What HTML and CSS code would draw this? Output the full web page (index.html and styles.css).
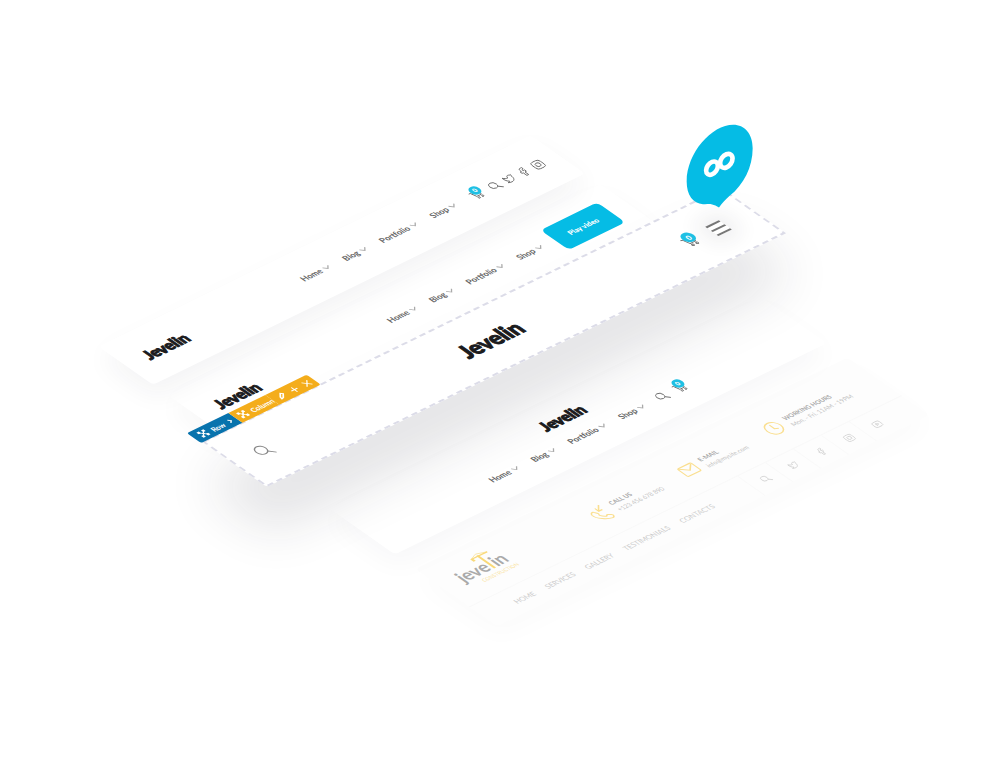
FILE: index.html
```html
<!DOCTYPE html>
<html lang="en">
<head>
<meta charset="utf-8">
<title>Jevelin header builder</title>
<link rel="stylesheet" href="styles.css">
</head>
<body>
<svg class="sprite" aria-hidden="true">
  <symbol id="chev" viewBox="0 0 8 8"><path d="M1 2.500 4 5.500 7 2.500"/></symbol>
  <symbol id="search" viewBox="0 0 14 14"><circle cx="5.800" cy="5.800" r="4.500"/><path d="m9 9 4.200 4.200"/></symbol>
  <symbol id="cart" viewBox="0 0 14 14"><path d="M.5 2h2.300l2 7h6.400l1.800-5.200H3.500"/><circle cx="5.600" cy="11.600" r="1.100"/><circle cx="10.600" cy="11.600" r="1.100"/></symbol>
  <symbol id="twitter" viewBox="0 0 14 14"><path d="M1.500 2.500C3 4.500 5 5.200 7 5.200 6.700 2.500 9.800 1.300 11.300 3l1.700-.4-1 1.900C12.300 9 9.500 12 5.800 12 4 12 2.500 11.600 1.300 10.800c1.500 0 2.500-.3 3.200-1C2.300 9 1.200 6 1.500 2.500Z"/></symbol>
  <symbol id="facebook" viewBox="0 0 14 14"><path d="M5.300 13V8H3.700V5.500h1.600V4C5.300 2 6.400 1 8.200 1h1.800v2.400H8.700c-.7 0-.9.300-.9.900v1.200H10L9.700 8H7.800v5Z"/></symbol>
  <symbol id="instagram" viewBox="0 0 14 14"><rect x="1" y="1" width="12" height="12" rx="3.500"/><circle cx="7" cy="7" r="2.900"/><path d="M10.400 3.500h.2"/></symbol>
  <symbol id="youtube" viewBox="0 0 14 14"><rect x="1" y="2" width="12" height="10" rx="3"/><path d="m5.500 5 3.500 2-3.500 2Z"/></symbol>
  <symbol id="move" viewBox="0 0 14 14"><path d="m3 3 8 8M11 3l-8 8"/><path d="M1 1h4v4H1zM9 1h4v4H9zM1 9h4v4H1zM9 9h4v4H9zM5.500 5.500h3v3h-3z" fill="currentColor" stroke="none"/></symbol>
</svg>
<main class="stage">
  <div class="plane">

    <section class="sheet sheet-classic">
      <a class="logo" href="#">Jevelin</a>
      <nav class="menu">
        <a href="#">Home<svg><use href="#chev"/></svg></a>
        <a href="#">Blog<svg><use href="#chev"/></svg></a>
        <a href="#">Portfolio<svg><use href="#chev"/></svg></a>
        <a href="#">Shop<svg><use href="#chev"/></svg></a>
      </nav>
      <div class="tools">
        <a class="cart" href="#" aria-label="Cart"><svg><use href="#cart"/></svg><span class="badge">0</span></a>
        <a href="#" aria-label="Search"><svg><use href="#search"/></svg></a>
        <a href="#" aria-label="Twitter"><svg><use href="#twitter"/></svg></a>
        <a href="#" aria-label="Facebook"><svg><use href="#facebook"/></svg></a>
        <a href="#" aria-label="Instagram"><svg><use href="#instagram"/></svg></a>
      </div>
    </section>

    <section class="sheet sheet-video">
      <a class="logo" href="#">Jevelin</a>
      <nav class="menu">
        <a href="#">Home<svg><use href="#chev"/></svg></a>
        <a href="#">Blog<svg><use href="#chev"/></svg></a>
        <a href="#">Portfolio<svg><use href="#chev"/></svg></a>
        <a href="#">Shop<svg><use href="#chev"/></svg></a>
      </nav>
      <button class="play" type="button">Play video</button>
    </section>

    <section class="sheet sheet-build">
      <a class="logo" href="#">Jevelin</a>
      <div class="line">
        <nav class="menu">
          <a href="#">Home<svg><use href="#chev"/></svg></a>
          <a href="#">Blog<svg><use href="#chev"/></svg></a>
          <a href="#">Portfolio<svg><use href="#chev"/></svg></a>
          <a href="#">Shop<svg><use href="#chev"/></svg></a>
        </nav>
        <div class="tools">
          <a href="#" aria-label="Search"><svg><use href="#search"/></svg></a>
          <a class="cart" href="#" aria-label="Cart"><svg><use href="#cart"/></svg><span class="badge">0</span></a>
        </div>
      </div>
    </section>

    <section class="sheet sheet-company">
      <div class="company-top">
        <a class="crane-logo" href="#">
          <span class="crane-name">jeve<svg class="crane" viewBox="0 0 6 20"><path d="M3 1v19" stroke-width="2.200"/><path d="M-5 2h18" stroke-width="1.200"/><path d="m-5 2 8-3 10 3" stroke-width=".5"/><path d="M-4 2v3" stroke-width="2.500"/></svg>in</span>
          <span class="crane-sub">CONSTRUCTION</span>
        </a>
        <div class="fact">
          <svg viewBox="0 0 22 22"><path d="M2 9c1-3 4-4 5-2l2 3c.8 1.500-1.500 2-1 3 1 2 2.500 3.500 4.500 4.500 1 .5 1.500-2 3-1l3 2c2 1.500 0 4-2.500 4C10 22 1 15 2 9ZM19 1l-7 7m0-5v5h5"/></svg>
          <p><strong>CALL US</strong><span>+123 456 678 890</span></p>
        </div>
        <div class="fact">
          <svg viewBox="0 0 22 22"><rect x="2" y="4" width="18" height="14" rx="1.500"/><path d="m3 5 8 7 8-7"/></svg>
          <p><strong>E-MAIL</strong><span>info@mysite.com</span></p>
        </div>
        <div class="fact">
          <svg viewBox="0 0 22 22"><circle cx="11" cy="11" r="9"/><path d="M11 5v6.500l4 2"/></svg>
          <p><strong>WORKING HOURS</strong><span>Mon. - Fri. 11AM - 19PM</span></p>
        </div>
      </div>
      <div class="company-bottom">
        <nav class="caps">
          <a href="#">HOME</a><a href="#">SERVICES</a><a href="#">GALLERY</a><a href="#">TESTIMONIALS</a><a href="#">CONTACTS</a>
        </nav>
        <div class="cells">
          <a href="#" aria-label="Search"><svg><use href="#search"/></svg></a>
          <a href="#" aria-label="Twitter"><svg><use href="#twitter"/></svg></a>
          <a href="#" aria-label="Facebook"><svg><use href="#facebook"/></svg></a>
          <a href="#" aria-label="Instagram"><svg><use href="#instagram"/></svg></a>
          <a href="#" aria-label="YouTube"><svg><use href="#youtube"/></svg></a>
        </div>
      </div>
    </section>

    <section class="sheet sheet-active">
      <svg class="outline"><rect x="1" y="1" width="575" height="67"/></svg>
      <div class="tabs">
        <button class="tab tab-row" type="button"><svg><use href="#move"/></svg>Row<svg class="caret" viewBox="0 0 8 8"><path d="M2 1.500 5 4 2 6.500"/></svg></button>
        <button class="tab tab-col" type="button"><svg><use href="#move"/></svg>Column</button>
        <div class="tab-actions">
          <button type="button" aria-label="Edit"><svg viewBox="0 0 12 12"><path d="m2 10 .6-3L8 1.600 10.400 4 5 9.400Z" stroke-width="2"/></svg></button>
          <button type="button" aria-label="Add"><svg viewBox="0 0 12 12"><path d="M6 1v10M1 6h10"/></svg></button>
          <button type="button" aria-label="Remove"><svg viewBox="0 0 12 12"><path d="m1.500 1.500 9 9M10.500 1.500l-9 9"/></svg></button>
        </div>
      </div>
      <a class="find" href="#" aria-label="Search"><svg><use href="#search"/></svg></a>
      <a class="logo logo-big" href="#">Jevelin</a>
      <div class="active-end">
        <a class="cart" href="#" aria-label="Cart"><svg><use href="#cart"/></svg><span class="badge">0</span></a>
        <button class="burger" type="button" aria-label="Menu"><i></i><i></i><i></i></button>
      </div>
    </section>
  </div>

  <svg class="bubble" viewBox="0 0 210 260" aria-hidden="true">
    <path d="M151 5C184 5 209 31 209 75C209 132 182 184 140 218C126 230 118 240 108 253Q98 246 85 243C77 242 70 244 60 243C30 241 11 216 11 175C11 90 86 5 151 5Z" fill="#05bce5"/>
    <g fill="none" stroke="#fff" stroke-width="14"><ellipse cx="87" cy="135" rx="22" ry="15" transform="rotate(-55 87 135)"/><ellipse cx="130" cy="113" rx="23" ry="16" transform="rotate(-55 130 113)"/></g>
  </svg>
</main>
</body>
</html>
```
FILE: styles.css
```css
* { box-sizing: border-box; }
body { margin: 0; background: #fff; font-family: Lato, "Open Sans", sans-serif; }
a { color: inherit; text-decoration: none; }
button { border: 0; padding: 0; background: none; font: inherit; color: inherit; }
svg { display: block; fill: none; stroke: currentColor; stroke-width: 1; overflow: visible; }
.sprite { position: absolute; width: 0; height: 0; }

.stage { position: relative; min-height: 100vh; overflow: hidden; }
/* Isometric floor: every header sheet lies flat on this plane */
.plane {
  position: absolute; top: 0; left: calc(50% - 501px); width: 0; height: 0;
  transform-origin: 0 0; transform: matrix(0.9, -0.44, 0.94, 0.66, 0, 0);
}
.sheet {
  position: absolute; left: -258px; width: 480px; display: flex; align-items: center;
  background: #fff; border-radius: 4px; color: #666;
}
.sheet-classic { top: 353px; height: 58px; padding: 0 17px 0 21px; z-index: 2; box-shadow: -10px 12px 24px rgba(40, 40, 50, .05); }
.sheet-video { top: 427px; height: 59px; padding: 0 19px 0 22px; box-shadow: -10px 12px 24px rgba(40, 40, 50, .04); }
.sheet-build { top: 598px; height: 70px; padding: 12px 6px 0 0; flex-direction: column; gap: 10px; z-index: 2; box-shadow: -10px 12px 24px rgba(40, 40, 50, .03); }
.sheet-company { top: 690px; height: 87px; flex-direction: column; align-items: stretch; background: #fdfdfd; box-shadow: -8px 10px 24px rgba(40, 40, 50, .02); }
.sheet-active {
  left: -279px; top: 483px; width: 577px; height: 69px; padding: 0 32px 0 24px; z-index: 3;
  justify-content: space-between; box-shadow: -36px 40px 48px 3px rgba(36, 36, 52, .12);
}

.logo { color: #1b1b1d; font-size: 15px; line-height: 18px; font-weight: 900; -webkit-text-stroke: 1px #1b1b1d; }
.logo-big { margin-left: 28px; font-size: 21px; line-height: 26px; }
.menu { display: flex; gap: 15px; font-size: 8px; line-height: 10px; font-weight: 700; }
.menu a { display: flex; align-items: center; gap: 2px; }
.menu svg { width: 8px; height: 8px; color: #aaa; }
.tools { display: flex; align-items: center; gap: 5px; }
.tools svg { width: 11px; height: 11px; stroke-width: 1; }
.sheet-classic .menu, .sheet-video .menu { margin-left: auto; }
.sheet-classic .tools { margin-left: 17px; }
.sheet-classic .cart { margin-right: 4px; }
.cart { position: relative; }
.badge {
  position: absolute; top: -4px; right: -2px; width: 10px; height: 10px; border-radius: 50%;
  background: #1fc0e4; color: #fff; font-size: 6px; line-height: 10px; font-weight: 900; text-align: center;
}
.play { width: 63px; height: 30px; margin-left: 13px; border-radius: 5px; background: #05bce5; color: #fff; font-size: 7px; font-weight: 900; }
.line { display: flex; align-items: center; gap: 14px; margin-left: 5px; }
.line .tools { gap: 9px; }

.outline { position: absolute; inset: 0; width: 100%; height: 100%; color: #dcdce8; stroke-width: 2; stroke-dasharray: 6 4; }
.tabs { position: absolute; left: -2px; top: -14px; display: flex; color: #fff; font-size: 7px; font-weight: 700; }
.tabs svg { width: 9px; height: 9px; stroke-width: 1.5; }
.tab { display: flex; align-items: center; gap: 4px; height: 15px; }
.tab-row { width: 46px; padding-left: 6px; background: #0873ad; border-radius: 2px 0 0 2px; }
.tabs .caret { width: 6px; height: 6px; }
.tab-col { padding-left: 4px; background: #f4ad1b; }
.tab-actions { display: flex; align-items: center; gap: 6px; padding: 0 4px 0 6px; background: #f4ad1b; border-radius: 0 2px 2px 0; }
.tab-actions svg { width: 8px; height: 8px; }
.find { color: #888; }
.find svg { width: 16px; height: 16px; }
.active-end { display: flex; align-items: center; gap: 17px; }
.active-end .cart svg { width: 13px; height: 13px; }
.active-end .badge { width: 12px; height: 12px; line-height: 12px; top: -4px; right: -2px; font-size: 7px; }
.burger { display: flex; flex-direction: column; gap: 4px; box-shadow: 0 0 18px 8px rgba(40, 40, 50, .07); }
.burger i { width: 15px; height: 2px; background: #777; }

.company-top { display: flex; align-items: center; height: 58px; padding: 4px 0 0 19px; gap: 25px; border-bottom: 1px solid #f9f9f9; }
.crane-logo { display: flex; flex-direction: column; width: 90px; margin-right: 30px; color: #aaa; }
.crane-name { display: flex; font-size: 17px; line-height: 18px; font-weight: 700; }
.crane { width: 6px; height: 20px; margin-top: -5px; color: #f9d978; }
.crane-sub { padding-left: 14px; color: #fae5a5; font-size: 5px; line-height: 6px; }
.fact { display: flex; align-items: center; gap: 6px; }
.fact svg { width: 18px; height: 18px; color: #fadf90; stroke-width: 1.5; }
.fact p { display: grid; margin: 0; font-size: 6px; line-height: 9px; color: #c4c4c4; white-space: nowrap; }
.fact strong { color: #aaa; font-weight: 700; }
.company-bottom { display: flex; align-items: stretch; justify-content: space-between; height: 29px; padding: 0 28px 0 34px; color: #ccc; }
.caps { display: flex; align-items: center; gap: 13px; font-size: 7px; font-weight: 400; }
.cells { display: flex; }
.cells a { display: flex; align-items: center; justify-content: center; width: 31px; border-left: 1px solid #f9f9f9; }
.cells svg { width: 9px; height: 9px; }

.bubble { position: absolute; left: calc(50% + 183px); top: 123px; width: 70px; height: 87px; stroke: none; }
```
